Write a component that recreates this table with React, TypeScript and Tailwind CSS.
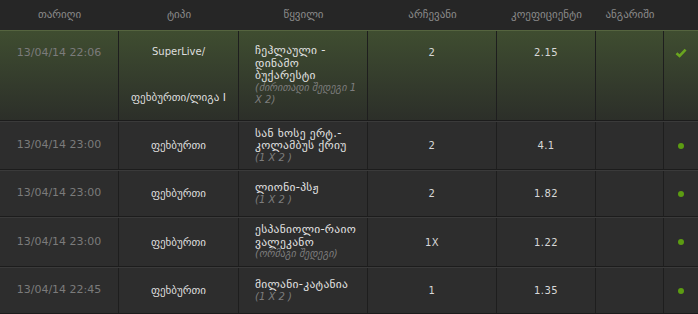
const font = { fontFamily: '"DejaVu Sans", sans-serif' };

type Bet = {
  date: string;
  type: string[];
  match: string[];
  note: string[];
  pick: string;
  odds: string;
  account: string;
  won?: boolean;
};

const bets: Bet[] = [
  {
    date: '13/04/14 22:06',
    type: ['SuperLive/', 'ფეხბურთი/ლიგა I'],
    match: ['ჩეჰლაული -', 'დინამო', 'ბუქარესტი'],
    note: ['(ძირითადი შედეგი 1', 'X 2)'],
    pick: '2',
    odds: '2.15',
    account: '',
    won: true,
  },
  {
    date: '13/04/14 23:00',
    type: ['ფეხბურთი'],
    match: ['სან ხოსე ერტ.-', 'კოლამბუს ქრიუ'],
    note: ['(1 X 2 )'],
    pick: '2',
    odds: '4.1',
    account: '',
  },
  {
    date: '13/04/14 23:00',
    type: ['ფეხბურთი'],
    match: ['ლიონი-პსჟ'],
    note: ['(1 X 2 )'],
    pick: '2',
    odds: '1.82',
    account: '',
  },
  {
    date: '13/04/14 23:00',
    type: ['ფეხბურთი'],
    match: ['ესპანიოლი-რაიო', 'ვალეკანო'],
    note: ['(ორმაგი შედეგი)'],
    pick: '1X',
    odds: '1.22',
    account: '',
  },
  {
    date: '13/04/14 22:45',
    type: ['ფეხბურთი'],
    match: ['მილანი-კატანია'],
    note: ['(1 X 2 )'],
    pick: '1',
    odds: '1.35',
    account: '',
  },
];

const heights = ['h-[91px]', 'h-[49px]', 'h-[47px]', 'h-[50px]', 'h-[47px]'];

const headers = ['თარიღი', 'ტიპი', 'წყვილი', 'არჩევანი', 'კოეფიციენტი', 'ანგარიში', ''];
const widths = ['w-[119px]', 'w-[120px]', 'w-[129px]', 'w-[129px]', 'w-[99px]', 'w-[68px]', 'flex-1'];

function Check() {
  return (
    <svg width="12" height="10" viewBox="0 0 12 10">
      <path d="M1.5 5.2 L4.6 8 L10.6 1.6" fill="none" stroke="#6aa51f" strokeWidth="2.6" />
    </svg>
  );
}

function Row({ bet, index }: { bet: Bet; index: number }) {
  const first = index === 0;
  const rowBg = first
    ? 'bg-gradient-to-b from-[#3f4d30] to-[#2c2f29] border-t-[#55643f]'
    : 'bg-[#2d2d2d] border-t-[#3a3a3a]';
  const cell = 'flex border-r border-[#1e1e1e]';
  const single = first ? 'items-start justify-center pt-[14px]' : 'items-center justify-center';

  return (
    <div className={`flex border-t border-b border-b-[#1c1c1c] ${rowBg} ${heights[index]}`}>
      <div className={`${cell} ${single} w-[119px] text-[11px] text-[#7b7b7b]`}>{bet.date}</div>
      <div
        className={`${cell} w-[120px] flex-col items-center text-[11px] text-[#dedede] ${
          first ? 'justify-between pt-[14px] pb-[16px]' : 'justify-center'
        }`}
      >
        {bet.type.map((t) => (
          <div key={t} className={`leading-[13px] ${t === 'SuperLive/' ? 'text-[10px]' : ''}`}>
            {t}
          </div>
        ))}
      </div>
      <div className={`${cell} w-[129px] flex-col justify-center pl-[16px] pr-[4px]`}>
        {bet.match.map((m) => (
          <div key={m} className="text-[11.5px] tracking-[0.3px] leading-[12.5px] text-[#e2e2e2] whitespace-nowrap">
            {m}
          </div>
        ))}
        {bet.note.map((n) => (
          <div key={n} className="text-[10px] leading-[12.5px] italic text-[#7d7d7d] whitespace-nowrap">
            {n}
          </div>
        ))}
      </div>
      <div className={`${cell} ${single} w-[129px] text-[10px] tracking-[0.4px] text-[#d8d8d8]`}>{bet.pick}</div>
      <div className={`${cell} ${single} w-[99px] text-[10px] tracking-[0.4px] text-[#d8d8d8]`}>{bet.odds}</div>
      <div className={`${cell} ${single} w-[68px] text-[10px] text-[#d8d8d8]`}>{bet.account}</div>
      <div className={`flex flex-1 justify-center ${first ? 'items-start pt-[17px]' : 'items-center'}`}>
        {bet.won ? <Check /> : <span className="block h-[6px] w-[6px] rounded-full bg-[#5c9c12]" />}
      </div>
    </div>
  );
}

export default function App() {
  return (
    <div className="w-[698px] h-[314px] overflow-hidden bg-[#2d2d2d]" style={font}>
      <div className="flex h-[30px] bg-[#262626]">
        {headers.map((h, i) => (
          <div key={i} className={`${widths[i]} flex items-center justify-center text-[11px] text-[#8a8a8a]`}>
            {h}
          </div>
        ))}
      </div>
      {bets.map((b, i) => (
        <Row key={i} bet={b} index={i} />
      ))}
    </div>
  );
}
